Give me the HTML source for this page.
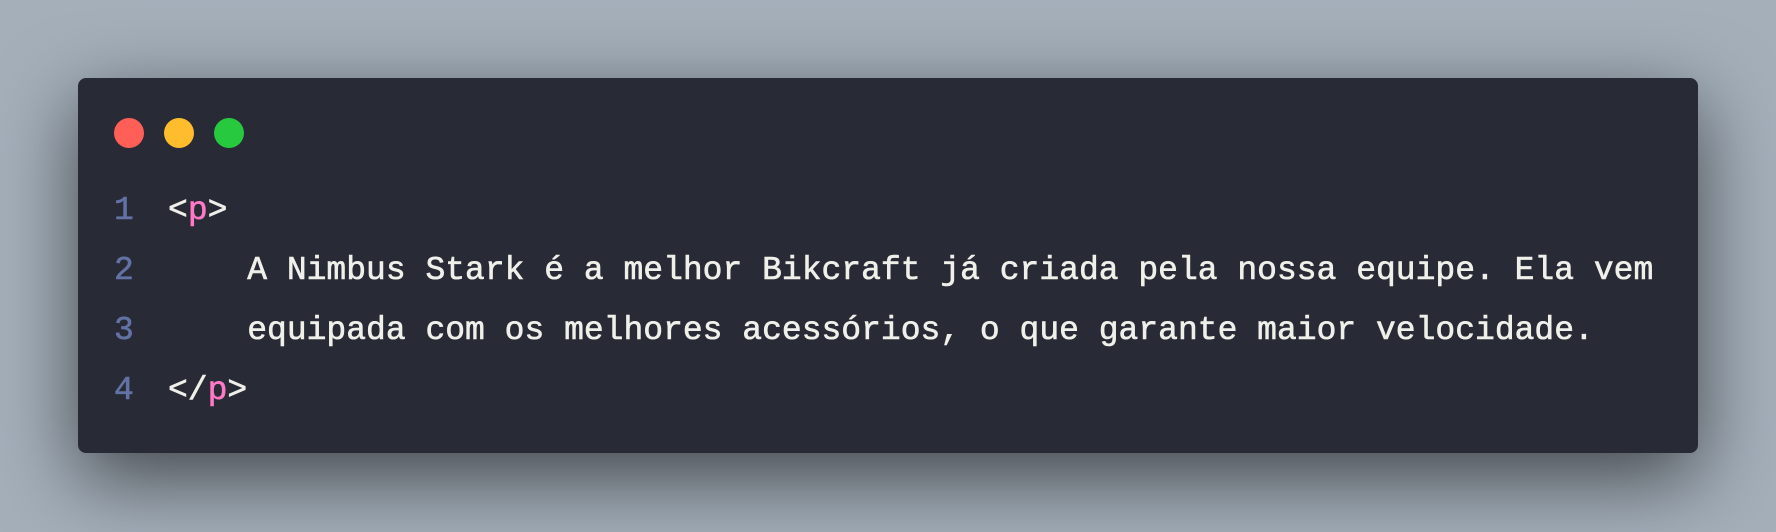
<!DOCTYPE html>
<html><head><meta charset="utf-8"><style>
html,body{margin:0;padding:0}
body{width:1776px;height:532px;background:#a4afba;position:relative;overflow:hidden}
.card{position:absolute;left:78px;top:78px;width:1620px;height:375px;background:#282a36;border-radius:8px;box-shadow:0 25px 80px rgba(0,0,0,0.6)}
.dot{position:absolute;top:40px;width:30px;height:30px;border-radius:50%}
.code{position:absolute;left:0;top:103px;font-family:"Liberation Mono",monospace;font-size:33px;line-height:60px;color:#f0f0ea;-webkit-text-stroke:0.6px #f0f0ea}
.row{height:60px;position:relative;white-space:pre}
.ln{position:absolute;left:36px;color:#6272a4;-webkit-text-stroke:0.6px #6272a4}
.t{position:absolute;left:90px}
.p{color:#ff79c6;-webkit-text-stroke:0.6px #ff79c6}
</style></head><body>
<div class="card">
<div class="dot" style="left:36px;background:#ff5f56"></div>
<div class="dot" style="left:86px;background:#ffbd2e"></div>
<div class="dot" style="left:136px;background:#27c93f"></div>
<div class="code"><div class="row"><span class="ln">1</span><span class="t">&lt;<span class="p">p</span>&gt;</span></div><div class="row"><span class="ln">2</span><span class="t">    A Nimbus Stark é a melhor Bikcraft já criada pela nossa equipe. Ela vem</span></div><div class="row"><span class="ln">3</span><span class="t">    equipada com os melhores acessórios, o que garante maior velocidade.</span></div><div class="row"><span class="ln">4</span><span class="t">&lt;/<span class="p">p</span>&gt;</span></div></div>
</div>
</body></html>
